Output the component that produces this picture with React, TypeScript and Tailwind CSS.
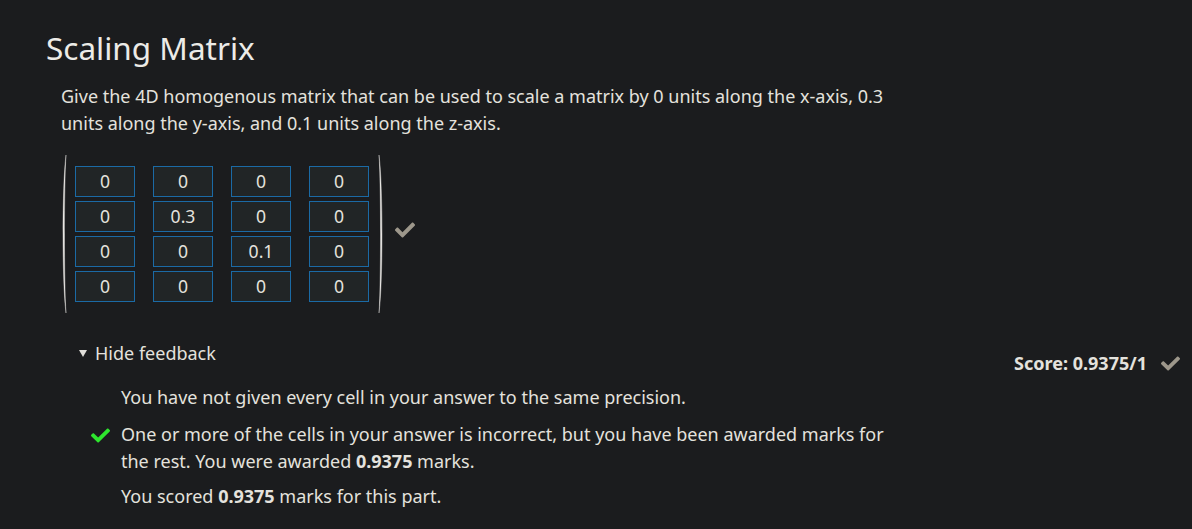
import { FaCheck } from "react-icons/fa";

const matrix = [
  ["0", "0", "0", "0"],
  ["0", "0.3", "0", "0"],
  ["0", "0", "0.1", "0"],
  ["0", "0", "0", "0"],
];

function Paren({ flip = false }: { flip?: boolean }) {
  return (
    <svg
      width="6"
      height="158"
      viewBox="0 0 6 158"
      className={flip ? "-scale-x-100" : ""}
      aria-hidden="true"
    >
      <path
        d="M5 0 C1 30 1 128 5 158 C3 128 3 30 5 0 Z"
        fill="#e8e6e3"
        stroke="#e8e6e3"
        strokeWidth="0.4"
      />
    </svg>
  );
}

export default function App() {
  return (
    <div
      className="min-h-[529px] w-full bg-[#1b1c1e] text-[#e4e2dd]"
      style={{ fontFamily: '"Noto Sans", "Open Sans", sans-serif' }}
    >
      <div className="pl-[46px] pr-[12px] pt-[28px]">
        <h1 className="text-[31.5px] leading-[40px] text-[#ecebe7]">Scaling Matrix</h1>

        <div className="pl-[15px]">
          <p className="mt-[15px] w-[840px] text-[18px] leading-[27px]">
            Give the 4D homogenous matrix that can be used to scale a matrix by 0 units along the
            x-axis, 0.3 units along the y-axis, and 0.1 units along the z-axis.
          </p>

          <div className="mt-[18px] flex items-center">
            <Paren />
            <div className="ml-[8px] grid grid-cols-[60px_60px_60px_60px] gap-x-[18px] gap-y-[4px] py-[11px]">
              {matrix.flat().map((v, i) => (
                <div
                  key={i}
                  className="flex h-[31px] items-center justify-center border border-[#1b6aa5] bg-[#212526] text-[17.6px]"
                >
                  {v}
                </div>
              ))}
            </div>
            <div className="ml-[9px]">
              <Paren flip />
            </div>
            <FaCheck className="ml-[11px] -mt-[8px] text-[20px] text-[#9d978b]" />
          </div>

          <div className="mt-[28px] flex items-start justify-between">
            <div className="w-[840px]">
              <div className="flex h-[24px] items-center pl-[18px] text-[18px]">
                <span className="mr-[8px] inline-block h-0 w-0 border-x-[4px] border-t-[7px] border-x-transparent border-t-[#e0ded9]" />
                Hide feedback
              </div>

              <div className="mt-[19px] pl-[60px] text-[18px] leading-[27px]">
                <p>You have not given every cell in your answer to the same precision.</p>
                <div className="relative mt-[10px]">
                  <FaCheck className="absolute -left-[30px] top-[5px] text-[19px] text-[#2ee62e]" />
                  <p>
                    One or more of the cells in your answer is incorrect, but you have been awarded
                    marks for the rest. You were awarded <b>0.9375</b> marks.
                  </p>
                </div>
                <p className="mt-[8px]">
                  You scored <b>0.9375</b> marks for this part.
                </p>
              </div>
            </div>

            <div className="mt-[10px] flex items-center text-[18px] font-bold leading-[24px]">
              Score: 0.9375/1
              <FaCheck className="ml-[14px] text-[19px] text-[#9d978b]" />
            </div>
          </div>
        </div>
      </div>
    </div>
  );
}
